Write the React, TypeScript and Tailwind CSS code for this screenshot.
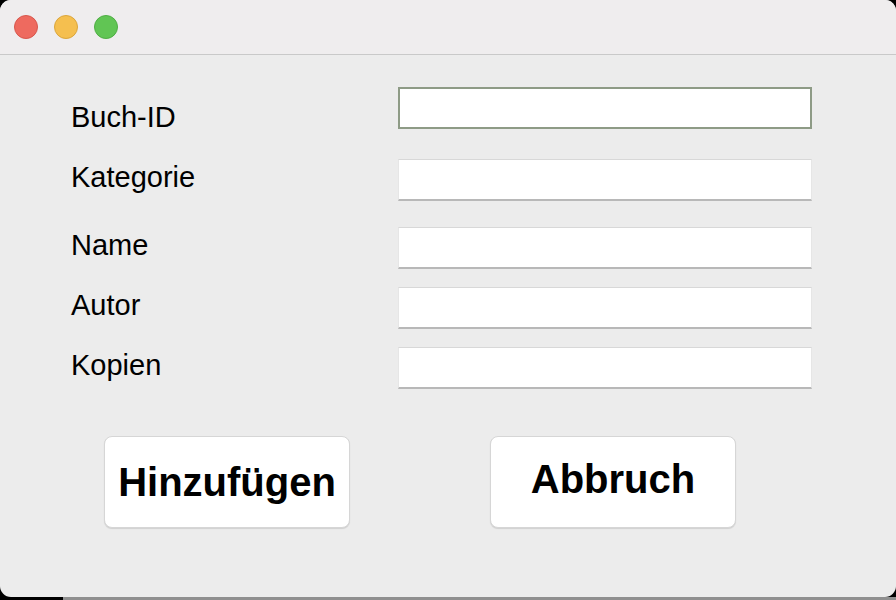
import React from 'react'

const fields = [
  { label: 'Buch-ID', rowClass: 'mt-[32px]', labelClass: 'mt-[16px]', focused: true },
  { label: 'Kategorie', rowClass: 'mt-[30px]', labelClass: 'mt-[4px]', focused: false },
  { label: 'Name', rowClass: 'mt-[26px]', labelClass: 'mt-[4px]', focused: false },
  { label: 'Autor', rowClass: 'mt-[18px]', labelClass: 'mt-[4px]', focused: false },
  { label: 'Kopien', rowClass: 'mt-[18px]', labelClass: 'mt-[4px]', focused: false },
]

export default function App() {
  return (
    <div
      className="w-[896px] h-[600px] bg-black flex flex-col overflow-hidden"
      style={{ fontFamily: '"Liberation Sans", Arial, sans-serif' }}
    >
      {/* ── Window ─────────────────────────────────────────── */}
      <div className="h-[597px] w-full bg-[#ececec] rounded-[11px] overflow-hidden flex flex-col">
        {/* Title bar */}
        <div className="h-[55px] shrink-0 bg-[#efedee] border-b border-[#c9c9c9] flex items-center pl-[14px] gap-[16px]">
          <span className="w-[24px] h-[24px] rounded-full bg-[#ee6a5f] border border-[#d8574d]" />
          <span className="w-[24px] h-[24px] rounded-full bg-[#f5bf4f] border border-[#dba63c]" />
          <span className="w-[24px] h-[24px] rounded-full bg-[#61c554] border border-[#4fae44]" />
        </div>

        {/* Form */}
        <div className="flex flex-col">
          {fields.map(f => (
            <div key={f.label} className={`flex items-start h-[42px] ${f.rowClass}`}>
              <span
                className={`w-[398px] pl-[71px] text-[29px] leading-none text-black ${f.labelClass}`}
              >
                {f.label}
              </span>
              <input
                type="text"
                className={
                  f.focused
                    ? 'w-[414px] h-[42px] bg-white border-2 border-[#8e9b86] outline-none'
                    : 'w-[414px] h-[42px] bg-white border border-[#e6e6e6] border-t-[#d8d8d8] border-b-2 border-b-[#b8b8b8] outline-none'
                }
              />
            </div>
          ))}

          {/* Buttons */}
          <div className="flex mt-[47px] pl-[104px] gap-[140px]">
            <button
              type="button"
              className="w-[246px] h-[92px] bg-white rounded-[8px] border border-[#d6d6d6] shadow-[0_1px_1px_rgba(0,0,0,0.12)] flex items-center justify-center text-[40px] font-bold text-black"
            >
              Hinzufügen
            </button>
            <button
              type="button"
              className="w-[246px] h-[92px] bg-white rounded-[8px] border border-[#d6d6d6] shadow-[0_1px_1px_rgba(0,0,0,0.12)] flex items-center justify-center pb-[6px] text-[40px] font-bold text-black"
            >
              Abbruch
            </button>
          </div>
        </div>
      </div>

      {/* Desktop strip below the window */}
      <div className="flex h-[3px]">
        <div className="w-[63px] bg-black" />
        <div className="flex-1 bg-[#8f8f8f]" />
      </div>
    </div>
  )
}
